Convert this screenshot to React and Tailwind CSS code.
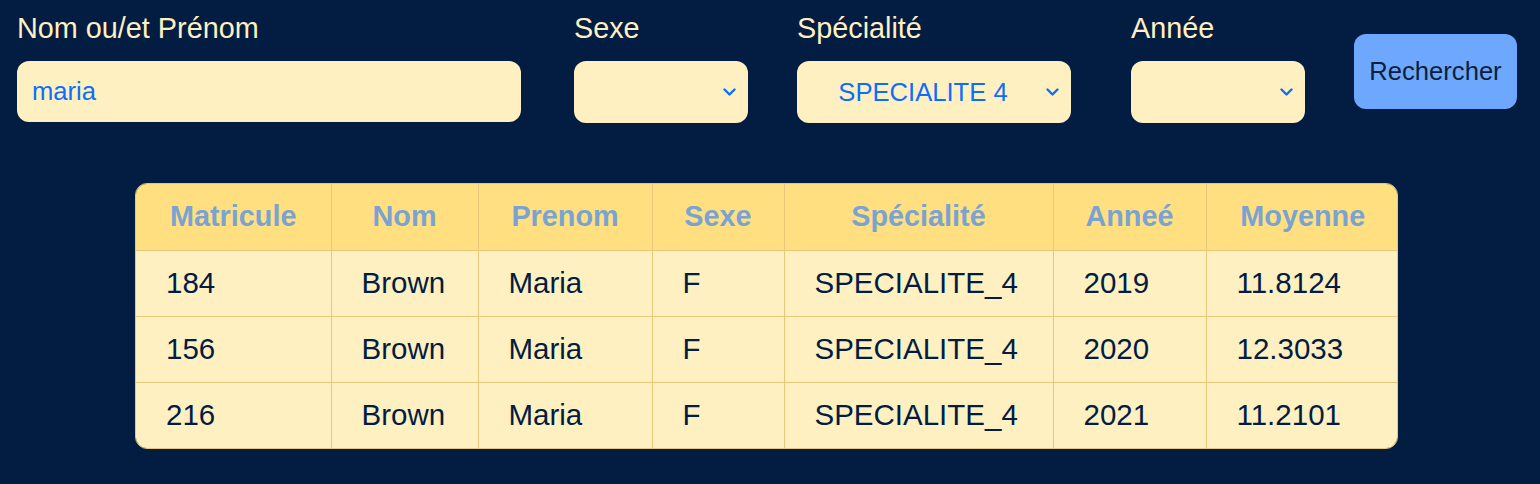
const rows = [
  { matricule: "184", nom: "Brown", prenom: "Maria", sexe: "F", specialite: "SPECIALITE_4", annee: "2019", moyenne: "11.8124" },
  { matricule: "156", nom: "Brown", prenom: "Maria", sexe: "F", specialite: "SPECIALITE_4", annee: "2020", moyenne: "12.3033" },
  { matricule: "216", nom: "Brown", prenom: "Maria", sexe: "F", specialite: "SPECIALITE_4", annee: "2021", moyenne: "11.2101" },
];

const headers = ["Matricule", "Nom", "Prenom", "Sexe", "Spécialité", "Anneé", "Moyenne"];
const widths = ["w-[195px]", "w-[147px]", "w-[174px]", "w-[132px]", "w-[269px]", "w-[153px]", "w-[193px]"];

function Chevron() {
  return (
    <svg
      className="pointer-events-none absolute right-[12px] top-1/2 -translate-y-1/2"
      width="13"
      height="8"
      viewBox="0 0 13 8"
      fill="none"
    >
      <path d="M1.5 1.5l5 5 5-5" stroke="#0d6efd" strokeWidth="2.4" strokeLinecap="round" strokeLinejoin="round" />
    </svg>
  );
}

function Select({ width, value }) {
  return (
    <div className={`relative h-[62px] ${width} rounded-[12px] bg-[#fff0c1]`}>
      <div className="flex h-full items-center justify-center pr-[22px] text-[25.6px] text-[#0d6efd]">
        {value}
      </div>
      <Chevron />
    </div>
  );
}

function Field({ label, children, className = "" }) {
  return (
    <div className={`flex flex-col ${className}`}>
      <label className="text-[28.8px] leading-[33px] text-[#fff0c1]">{label}</label>
      <div className="mt-[16px]">{children}</div>
    </div>
  );
}

export default function App() {
  return (
    <div className="min-h-screen w-full bg-[#031c42] [font-family:'Liberation_Sans',Arial,sans-serif]">
      {/* search bar */}
      <div className="flex items-start pl-[17px] pt-[12px]">
        <Field label="Nom ou/et Prénom">
          <input
            defaultValue="maria"
            className="h-[61px] w-[504px] rounded-[12px] bg-[#fff0c1] px-[15px] text-[25.6px] text-[#0d6efd] outline-none"
          />
        </Field>
        <Field label="Sexe" className="ml-[53px]">
          <Select width="w-[174px]" value="" />
        </Field>
        <Field label="Spécialité" className="ml-[49px]">
          <Select width="w-[274px]" value="SPECIALITE 4" />
        </Field>
        <Field label="Année" className="ml-[60px]">
          <Select width="w-[174px]" value="" />
        </Field>
        <button className="ml-[49px] mt-[22px] h-[75px] w-[163px] rounded-[12px] bg-[#6ea8fe] text-[25.6px] text-[#0b1f3a]">
          Rechercher
        </button>
      </div>

      {/* results */}
      <div className="ml-[135px] mt-[60px] w-[1263px] overflow-hidden rounded-[12px] border border-[#e8c878]">
        <table className="w-full table-fixed border-collapse">
          <thead>
            <tr className="h-[66px] bg-[#ffdf80]">
              {headers.map((h, i) => (
                <th
                  key={h}
                  className={`${widths[i]} border-l border-[#e8c878] text-center text-[28.8px] font-bold text-[#7aa3d2] first:border-l-0`}
                >
                  {h}
                </th>
              ))}
            </tr>
          </thead>
          <tbody>
            {rows.map((r) => (
              <tr key={r.matricule} className="h-[66px] border-t border-[#e8c878] bg-[#fff0c1]">
                {[r.matricule, r.nom, r.prenom, r.sexe, r.specialite, r.annee, r.moyenne].map((v, i) => (
                  <td
                    key={i}
                    className="border-l border-[#e8c878] pl-[30px] pr-0 text-left text-[29.5px] text-[#031c42] first:border-l-0"
                  >
                    {v}
                  </td>
                ))}
              </tr>
            ))}
          </tbody>
        </table>
      </div>
    </div>
  );
}
